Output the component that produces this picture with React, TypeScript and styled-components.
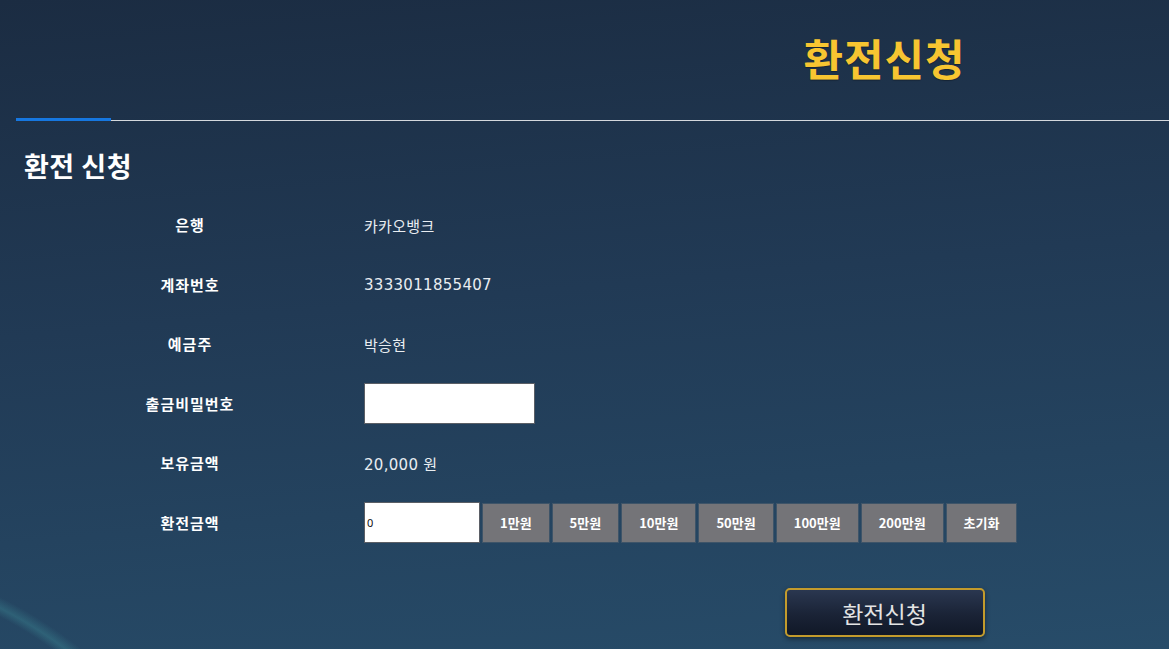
import React, { useState } from "react";
import styled, { createGlobalStyle } from "styled-components";

const GlobalStyle = createGlobalStyle`
  html, body {
    margin: 0;
    padding: 0;
  }
  body {
    min-height: 649px;
    background:
      radial-gradient(circle at -200px 1000px, transparent 0, transparent 432px, rgba(70, 165, 170, 0.28) 440px, transparent 450px),
      linear-gradient(175deg, #1b2c42 0%, #213a55 45%, #274c69 100%);
    font-family: "Noto Sans CJK KR", "Noto Sans", sans-serif;
    color: #ffffff;
    overflow: hidden;
  }
`;

const amounts = ["1만원", "5만원", "10만원", "50만원", "100만원", "200만원"];
const values = [10000, 50000, 100000, 500000, 1000000, 2000000];

const App: React.FC = () => {
  const [amount, setAmount] = useState<number>(0);
  const [password, setPassword] = useState<string>("");

  return (
    <>
      <GlobalStyle />
      <Page>
        <Header>
          <PageTitle>환전신청</PageTitle>
        </Header>
        <TabLine>
          <TabIndicator />
        </TabLine>
        <SectionTitle>환전 신청</SectionTitle>
        <Form>
          <Label>은행</Label>
          <Value>카카오뱅크</Value>
          <Label>계좌번호</Label>
          <Value>3333011855407</Value>
          <Label>예금주</Label>
          <Value>박승현</Value>
          <Label>출금비밀번호</Label>
          <Value>
            <PasswordInput
              type="password"
              value={password}
              onChange={(e) => setPassword(e.target.value)}
            />
          </Value>
          <Label>보유금액</Label>
          <Value>20,000 원</Value>
          <Label>환전금액</Label>
          <Value>
            <AmountRow>
              <AmountInput
                value={amount}
                onChange={(e) => setAmount(parseInt(e.target.value) || 0)}
              />
              {amounts.map((label, i) => (
                <QuickButton
                  key={label}
                  onClick={() => setAmount((prev) => prev + values[i])}
                >
                  {label}
                </QuickButton>
              ))}
              <QuickButton onClick={() => setAmount(0)}>초기화</QuickButton>
            </AmountRow>
          </Value>
        </Form>
        <Actions>
          <SubmitButton>환전신청</SubmitButton>
        </Actions>
      </Page>
    </>
  );
};

const Page = styled.div`
  padding-left: 16px;
  min-height: 649px;
  box-sizing: border-box;
`;

const Header = styled.header`
  height: 117px;
  display: flex;
  align-items: center;
  justify-content: center;
  padding-left: 584px;
  box-sizing: border-box;
`;

const PageTitle = styled.h1`
  margin: 0 0 4px;
  font-size: 43px;
  font-weight: 700;
  line-height: 48px;
  color: #f7c531;
  letter-spacing: 1px;
  text-shadow: 0 1px 1px rgba(0, 0, 0, 0.3);
`;

const TabLine = styled.div`
  height: 4px;
  border-bottom: 1px solid #d4d8dd;
  box-sizing: border-box;
  display: flex;
  align-items: flex-end;
`;

const TabIndicator = styled.div`
  width: 95px;
  height: 3px;
  margin-bottom: -1px;
  background: #1677e0;
`;

const SectionTitle = styled.h2`
  margin: 29px 0 0 8px;
  font-size: 27px;
  line-height: 32px;
  font-weight: 700;
  letter-spacing: 0.5px;
  color: #ffffff;
`;

const Form = styled.div`
  display: grid;
  grid-template-columns: 348px 1fr;
  grid-auto-rows: 59.5px;
  margin-top: 13px;
`;

const Label = styled.div`
  display: flex;
  align-items: center;
  justify-content: center;
  font-size: 15px;
  font-weight: 700;
  letter-spacing: 1px;
  color: #ffffff;
`;

const Value = styled.div`
  display: flex;
  align-items: center;
  padding-top: 1px;
  font-family: "DejaVu Sans", "Noto Sans CJK KR", sans-serif;
  font-size: 15px;
  letter-spacing: 0.3px;
  color: #e9edf1;
`;

const TextBox = styled.input`
  height: 41px;
  box-sizing: border-box;
  border: 1px solid #5b5f66;
  background: #ffffff;
  outline: none;
  font-family: "Noto Sans", sans-serif;
  color: #111;
`;

const PasswordInput = styled(TextBox)`
  width: 171px;
`;

const AmountInput = styled(TextBox)`
  width: 116px;
  padding: 0 2px;
  font-size: 11px;
`;

const AmountRow = styled.div`
  display: flex;
  align-items: center;
  gap: 2px;
`;

const QuickButton = styled.button`
  height: 40px;
  padding: 0 17px;
  background: #747478;
  border: 1px solid #3e5468;
  color: #ffffff;
  font-family: "Noto Sans CJK KR", sans-serif;
  font-size: 13px;
  font-weight: 700;
  letter-spacing: 0;
  cursor: pointer;
`;

const Actions = styled.div`
  display: flex;
  justify-content: center;
  padding-left: 584px;
  margin-top: 36px;
`;

const SubmitButton = styled.button`
  width: 200px;
  height: 49px;
  border: 2px solid #c39b2c;
  border-radius: 5px;
  background: linear-gradient(to bottom, #2a3750 0%, #1a2336 55%, #111827 100%);
  color: #e4e4e4;
  font-family: "Noto Sans CJK KR", sans-serif;
  font-size: 23px;
  font-weight: 400;
  box-shadow: 0 2px 5px rgba(0, 0, 0, 0.45);
  cursor: pointer;
`;

export default App;
